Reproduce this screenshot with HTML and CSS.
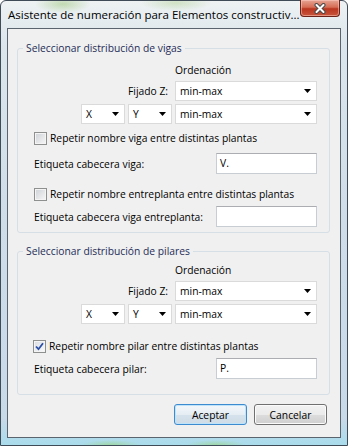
FILE: index.html
```html
<!DOCTYPE html>
<html lang="es">
<head>
    <meta charset="UTF-8">
    <title>Asistente de numeración</title>
    <link rel="stylesheet" href="styles.css">
</head>
<body>
    <div class="window">
        <div class="titlebar">
            <span class="title">Asistente de numeración para Elementos constructiv...</span>
            <span class="close">
                <svg width="14" height="11" viewBox="0 0 14 11">
                    <path d="M3.5 2 L10.5 9 M10.5 2 L3.5 9" stroke="#4b4b4b" stroke-width="4" stroke-linecap="round"/>
                    <path d="M3.5 2 L10.5 9 M10.5 2 L3.5 9" stroke="#ffffff" stroke-width="2" stroke-linecap="round"/>
                </svg>
            </span>
        </div>
        <div class="client">
            <fieldset class="group">
                <legend>Seleccionar distribución de vigas</legend>
                <div class="group-body vigas">
                    <div class="order">
                        <span class="order-head">Ordenación</span>
                        <span class="fix-label">Fijado Z:</span>
                        <span class="combo combo-wide">min-max</span>
                        <span class="combo">X</span>
                        <span class="combo">Y</span>
                        <span class="combo combo-wide">min-max</span>
                    </div>
                    <div class="check check-first"><span class="box"></span>Repetir nombre viga entre distintas plantas</div>
                    <div class="field field-first"><span>Etiqueta cabecera viga:</span><span class="input">V.</span></div>
                    <div class="check check-second"><span class="box"></span>Repetir nombre entreplanta entre distintas plantas</div>
                    <div class="field field-second"><span>Etiqueta cabecera viga entreplanta:</span><span class="input"></span></div>
                </div>
            </fieldset>

            <fieldset class="group group-pilares">
                <legend>Seleccionar distribución de pilares</legend>
                <div class="group-body pilares">
                    <div class="order">
                        <span class="order-head">Ordenación</span>
                        <span class="fix-label">Fijado Z:</span>
                        <span class="combo combo-wide">min-max</span>
                        <span class="combo">X</span>
                        <span class="combo">Y</span>
                        <span class="combo combo-wide">min-max</span>
                    </div>
                    <div class="check check-pilar">
                        <span class="box checked">
                            <svg width="9" height="9" viewBox="0 0 9 9">
                                <path d="M1 4.5 L3.5 7.2 L8 1.2" fill="none" stroke="#2a4fa8" stroke-width="1.8"/>
                            </svg>
                        </span>Repetir nombre pilar entre distintas plantas
                    </div>
                    <div class="field field-pilar"><span>Etiqueta cabecera pilar:</span><span class="input">P.</span></div>
                </div>
            </fieldset>

            <div class="buttons">
                <button class="btn btn-default">Aceptar</button>
                <button class="btn">Cancelar</button>
            </div>
        </div>
    </div>
</body>
</html>
```

FILE: styles.css
```css
body {
    margin: 0;
    font-family: "Open Sans", "Noto Sans", sans-serif;
    font-size: 10.3px;
    color: #000000;
    background-color: #ffffff;
}
.window {
    width: 348px;
    height: 446px;
    box-sizing: border-box;
    display: flex;
    flex-direction: column;
    border: 1px solid #3f4b57;
    border-radius: 6px 6px 0 0;
    background:
        radial-gradient(ellipse 28px 9px at 62px 3px, rgba(140, 190, 100, 0.45), transparent),
        radial-gradient(ellipse 36px 8px at 175px 2px, rgba(150, 195, 110, 0.35), transparent),
        radial-gradient(ellipse 30px 5px at 110px 444px, rgba(150, 210, 100, 0.5), transparent),
        radial-gradient(ellipse 30px 5px at 215px 444px, rgba(150, 210, 100, 0.5), transparent),
        linear-gradient(#eef2f3, #dbe5eb 10%, #cfdde9 50%, #c8d9e8 94%, #a9dcec);
}
.titlebar {
    height: 27px;
    display: flex;
    align-items: flex-start;
    justify-content: space-between;
    padding-left: 7px;
}
.title {
    font-size: 11.5px;
    line-height: 15px;
    margin-top: 6px;
    white-space: nowrap;
}
.close {
    width: 40px;
    height: 17px;
    box-sizing: border-box;
    margin-top: -1px;
    margin-right: 7px;
    display: flex;
    align-items: center;
    justify-content: center;
    border: 1px solid #6b2218;
    border-top: none;
    border-radius: 0 0 4px 4px;
    background: linear-gradient(#e7a595, #d56c55 45%, #b9351f 55%, #c9563d);
    box-shadow: inset 0 0 0 1px rgba(255, 210, 200, 0.5);
}
.client {
    flex: 1;
    margin: 0 6px 7px 6px;
    padding-top: 12px;
    border: 1px solid #5a646e;
    background-color: #f0f0f0;
}
.group {
    margin: 0 10px 0 9px;
    padding: 0;
    min-inline-size: 0;
    border: 1px solid #d5dfe5;
    border-radius: 3px;
}
.group legend {
    margin-left: 5px;
    padding: 0 3px;
    line-height: 14px;
    color: #1e2d58;
}
.group-pilares {
    margin-top: 11px;
}
.group-body {
    padding: 8px 12px 5px 16px;
}
.group-body.pilares {
    padding-top: 5px;
    padding-bottom: 15px;
}
.order {
    display: grid;
    grid-template-columns: 44px 44px 142px;
    grid-template-rows: 15px 20px 20px;
    column-gap: 3px;
    row-gap: 3px;
    justify-content: end;
}
.order-head {
    grid-column: 3;
    line-height: 15px;
}
.fix-label {
    grid-column: 1 / 3;
    text-align: right;
    padding-right: 4px;
    align-self: center;
}
.combo {
    display: flex;
    align-items: center;
    justify-content: space-between;
    box-sizing: border-box;
    height: 20px;
    padding: 0 5px 0 4px;
    border: 1px solid #dadada;
    background-color: #ffffff;
}
.combo::after {
    content: "";
    width: 7px;
    height: 4px;
    background-color: #000000;
    clip-path: polygon(0 0, 100% 0, 50% 100%);
}
.check {
    display: flex;
    align-items: center;
    height: 16px;
    gap: 3px;
}
.check-first {
    margin-top: 6px;
}
.check-second {
    margin-top: 12px;
}
.check-pilar {
    margin-top: 14px;
    margin-left: -1px;
}
.box {
    width: 13px;
    height: 13px;
    box-sizing: border-box;
    display: flex;
    align-items: center;
    justify-content: center;
    border: 1px solid #8e8f8f;
    background: linear-gradient(135deg, #cdd1d6, #f7f7f7);
    box-shadow: inset 0 0 0 1px #f4f4f4;
}
.box.checked {
    background: linear-gradient(135deg, #d8dde3, #fafafa);
}
.field {
    display: flex;
    align-items: center;
    justify-content: space-between;
    height: 21px;
}
.field-first {
    margin-top: 7px;
}
.field-second,
.field-pilar {
    margin-top: 4px;
}
.input {
    width: 101px;
    height: 21px;
    box-sizing: border-box;
    padding-left: 3px;
    line-height: 19px;
    border: 1px solid #c8cdd4;
    border-top-color: #abadb3;
    background-color: #ffffff;
}
.buttons {
    display: flex;
    justify-content: flex-end;
    gap: 7px;
    margin-top: 9px;
    padding-right: 13px;
}
.btn {
    width: 73px;
    height: 21px;
    padding: 0;
    font: inherit;
    color: #000000;
    border: 1px solid #707070;
    border-radius: 3px;
    background: linear-gradient(#f2f2f2, #ebebeb 50%, #dddddd 50%, #cfcfcf);
    box-shadow: inset 0 0 0 1px #fbfbfb;
}
.btn-default {
    border-color: #3c8ad0;
    background: linear-gradient(#f3f7fa, #e6eef4 50%, #d6e2ec 50%, #cfdce7);
    box-shadow: inset 0 0 0 1px #bfe3f8;
}
```
